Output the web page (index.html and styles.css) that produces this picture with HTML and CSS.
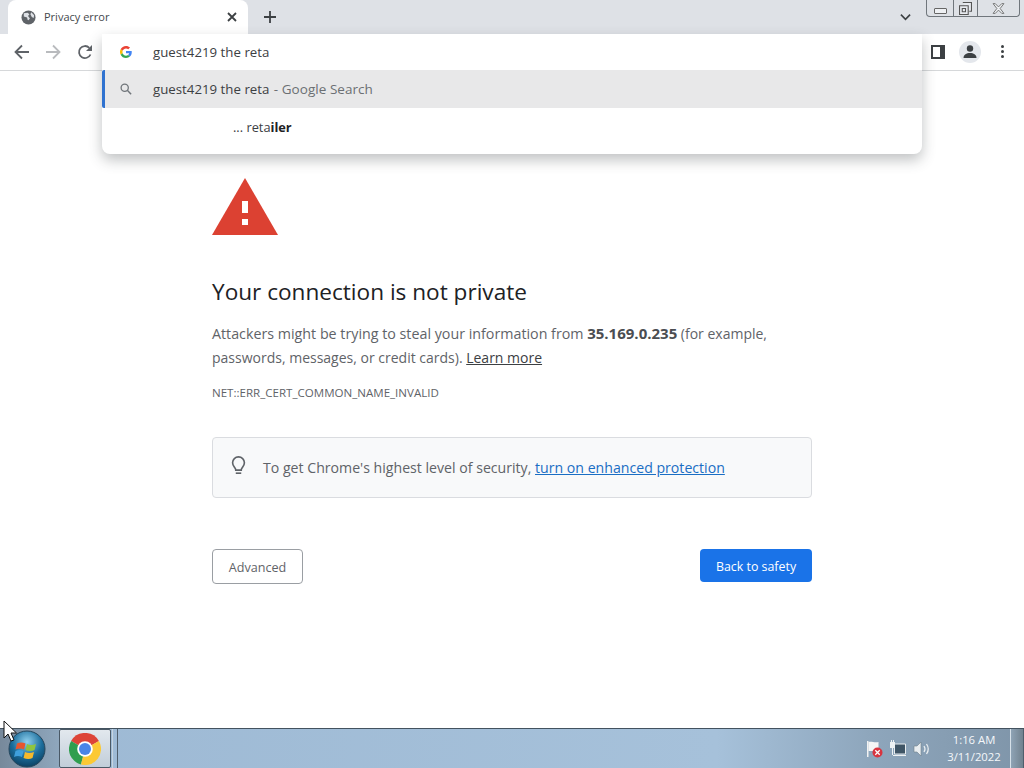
FILE: index.html
```html
<!DOCTYPE html>
<html lang="en">
<head>
<meta charset="utf-8">
<title>Privacy error</title>
<link rel="stylesheet" href="styles.css">
</head>
<body>
<div class="window">
  <header class="tabstrip">
    <div class="tab">
      <svg class="favicon" viewBox="0 0 16 16"><circle cx="8" cy="8" r="7.5" fill="#5f6368"/><path d="M3 3.500 7 3l2 1.500-1.500 2 2 2.500-1.500 2-1-.5-.5-2.500L3 7zM11 2.500l3 3-.5 3-2-1-1.500-3z" fill="#dee1e6"/></svg>
      <span class="tab-title">Privacy error</span>
      <svg class="tab-close" viewBox="0 0 10 10"><path d="M1 1l8 8M9 1l-8 8" stroke="#3c4043" stroke-width="1.800"/></svg>
    </div>
    <svg class="new-tab" viewBox="0 0 12 12"><path d="M6 0v12M0 6h12" stroke="#3c4043" stroke-width="1.800"/></svg>
    <div class="strip-spacer"></div>
    <svg class="tab-search" viewBox="0 0 12 8"><path d="M1 1.500l5 5 5-5" fill="none" stroke="#3c4043" stroke-width="1.800"/></svg>
    <div class="caption">
      <div class="cap cap-min"><span class="min-glyph"></span></div>
      <div class="cap cap-max"><svg viewBox="0 0 12 12" width="13" height="13"><path d="M3.500.5h8v8h-2M.5 3.500h8v8h-8zM3 6h3v3H3z" fill="#e8ebf0" stroke="#555"/></svg></div>
      <div class="cap cap-close"><svg viewBox="0 0 12 10" width="13" height="11"><path d="M1 .5h2L6 3.500 9 .5h2L7.500 5 11 9.500H9L6 6.500 3 9.500H1L4.500 5z" fill="#eef0f3" stroke="#666" stroke-width=".8"/></svg></div>
    </div>
  </header>

  <nav class="toolbar">
    <svg class="nav-icon nav-back" viewBox="0 0 16 16"><path d="M15 8H2M8 1.500 1.500 8 8 14.500" fill="none" stroke="#5f6368" stroke-width="1.800"/></svg>
    <svg class="nav-icon nav-forward" viewBox="0 0 16 16"><path d="M1 8h13M8 1.500 14.500 8 8 14.500" fill="none" stroke="#b9bbbe" stroke-width="1.800"/></svg>
    <svg class="nav-icon nav-reload" viewBox="0 0 16 16"><path d="M13.500 10.500A6 6 0 1 1 12.300 3.800" fill="none" stroke="#5f6368" stroke-width="1.800"/><path d="M15 1v6H9z" fill="#5f6368"/></svg>
    <div class="toolbar-spacer"></div>
    <svg class="tool-panel" viewBox="0 0 14 14"><path d="M0 0h14v14H0z" fill="#3c4043"/><path d="M2 2h7v10H2z" fill="#fff"/></svg>
    <div class="avatar"><svg viewBox="0 0 16 16" width="16" height="16"><circle cx="8" cy="4.500" r="3.200" fill="#3c4043"/><path d="M1.500 14c0-3.500 3-5 6.500-5s6.500 1.500 6.500 5z" fill="#3c4043"/></svg></div>
    <div class="kebab"><i></i><i></i><i></i></div>
  </nav>

  <main class="page">
    <div class="interstitial">
      <svg class="warn" viewBox="0 0 66 57"><path d="M33 0 66 57H0z" fill="#dc4132"/><path d="M30 23h6v12h-6zM30 41h6v6h-6z" fill="#fff"/></svg>
      <h1 class="heading">Your connection is not private</h1>
      <p class="lead"><span class="lead-wide">Attackers might be trying to steal your information from</span> <strong>35.169.0.235</strong> (for example, passwords, messages, or credit cards). <a class="learn">Learn more</a></p>
      <div class="errcode">NET::ERR_CERT_COMMON_NAME_INVALID</div>
      <div class="promo">
        <svg class="bulb" viewBox="0 0 16 22"><path d="M5 15.500C5 13 1.500 11.500 1.500 7.500a6.500 6.500 0 0 1 13 0c0 4-3.500 5.500-3.500 8z" fill="none" stroke="#5f6368" stroke-width="1.800"/><path d="M5 18h6v1.800H5z" fill="#5f6368"/></svg>
        <span>To get Chrome's highest level of security, <a class="promo-link">turn on enhanced protection</a></span>
      </div>
      <div class="actions">
        <button class="btn-advanced">Advanced</button>
        <button class="btn-safety">Back to safety</button>
      </div>
    </div>
  </main>

  <footer class="taskbar">
    <div class="start">
      <svg viewBox="0 0 38 38" width="38" height="38">
        <defs><radialGradient id="orb" cx=".5" cy=".3" r=".75"><stop offset="0" stop-color="#8fd0ee"/><stop offset=".55" stop-color="#1b6d9c"/><stop offset="1" stop-color="#0a3a59"/></radialGradient></defs>
        <circle cx="19" cy="19" r="18" fill="url(#orb)" stroke="#26465c"/>
        <path d="M9 13.500q4-2 8.500 0l-1.500 6q-4-2-8.500 0z" fill="#e8562e"/>
        <path d="M19 14q4 2 9 0l-1.500 6q-4 2-9 0z" fill="#8fc53e"/>
        <path d="M7.500 21q4-2 8 0l-1.500 6q-4-2-8 0z" fill="#3f9fdc"/>
        <path d="M17 22q4 2 9 0l-1.500 6q-4 2-9 0z" fill="#f6b92c"/>
      </svg>
    </div>
    <div class="task-chrome">
      <svg viewBox="0 0 32 32" width="32" height="32">
        <path d="M16 16 2.100 8A16 16 0 0 1 29.900 8z" fill="#dd4438"/>
        <path d="M16 16 2.100 8A16 16 0 0 0 12 31.500z" fill="#2f9e4f"/>
        <path d="M16 16 29.900 8A16 16 0 0 1 12 31.500z" fill="#fcc934"/>
        <circle cx="16" cy="16" r="7.800" fill="#fff"/>
        <circle cx="16" cy="16" r="6" fill="#4a85e8"/>
      </svg>
    </div>
    <div class="task-sliver"></div>
    <div class="task-spacer"></div>
    <div class="tray">
      <svg class="tray-icon" viewBox="0 0 18 18"><path d="M2 1h1.500v16H2z" fill="#f2f2f2"/><path d="M3.500 2c3-1 6 1 10 0v9h-10z" fill="#f6f6f6"/><circle cx="12.500" cy="12.500" r="5" fill="#d8343f"/><path d="M10.300 10.300l4.400 4.400M14.700 10.300l-4.400 4.400" stroke="#fff" stroke-width="1.300"/></svg>
      <svg class="tray-icon" viewBox="0 0 18 18"><path d="M5.500 4h11v10h-11z" fill="#3f5566" stroke="#e8edf0"/><path d="M1 2h5v6H1z" fill="#eef2f4"/><path d="M2 0h1v2H2zM4 0h1v2H4zM3 8h1v7H3zM4 15h13v1H4z" fill="#eef2f4"/></svg>
      <svg class="tray-icon" viewBox="0 0 18 18"><path d="M1 6h3l4-4v14l-4-4H1z" fill="#e8edf0" stroke="#6f7f8c" stroke-width=".6"/><path d="M11 6q2 3 0 6M13.500 4q3.500 5 0 10" fill="none" stroke="#e8edf0" stroke-width="1.300"/></svg>
    </div>
    <div class="clock"><span>1:16 AM</span><span>3/11/2022</span></div>
    <div class="show-desktop"></div>
  </footer>
</div>

<div class="omnibox">
  <div class="omni-input">
    <svg class="omni-g" viewBox="0 0 48 48"><path fill="#ea4335" d="M24 9.500c3.500 0 6.700 1.300 9.200 3.400l6.900-6.900C35.900 2.400 30.300 0 24 0 14.600 0 6.500 5.400 2.600 13.200l8 6.200C12.500 13.600 17.800 9.500 24 9.500z"/><path fill="#4285f4" d="M47 24.500c0-1.600-.2-3.100-.4-4.500H24v9h12.900c-.6 3-2.300 5.500-4.800 7.200l7.700 6C44.300 38 47 31.800 47 24.500z"/><path fill="#fbbc05" d="M10.600 28.600a14.500 14.500 0 0 1 0-9.200l-8-6.200a24 24 0 0 0 0 21.600z"/><path fill="#34a853" d="M24 48c6.500 0 11.900-2.100 15.800-5.800l-7.700-6c-2.100 1.400-4.900 2.300-8.100 2.300-6.200 0-11.500-4.100-13.400-9.900l-8 6.200C6.500 42.600 14.600 48 24 48z"/></svg>
    <span>guest4219 the reta</span>
  </div>
  <div class="omni-row selected">
    <svg class="omni-search" viewBox="0 0 14 14"><circle cx="5.500" cy="5.500" r="4.200" fill="none" stroke="#70757a" stroke-width="1.500"/><path d="M8.500 8.500l4.500 4.500" stroke="#70757a" stroke-width="1.700"/></svg>
    <span>guest4219 the reta <span class="omni-dim">- Google Search</span></span>
  </div>
  <div class="omni-row tail"><span>... reta<b>iler</b></span></div>
</div>

<svg class="cursor" viewBox="0 0 14 22"><path d="M1 1v17l4-4 3 7 3-1-3-7h5.500z" fill="#fff" stroke="#111" stroke-width="1"/></svg>
</body>
</html>
```
FILE: styles.css
```css
* { box-sizing: border-box; }
html, body { margin: 0; height: 100%; overflow: hidden; }
body { font-family: "Open Sans", "Noto Sans", "Liberation Sans", sans-serif; color: #3c4043; background: #fff; }
svg { display: block; flex: none; }

.window { display: flex; flex-direction: column; height: 768px; }

.tabstrip { height: 34px; flex: none; display: flex; align-items: flex-start; background: #dee1e6; padding-left: 8px; }
.tab { width: 240px; height: 34px; background: #fff; border-radius: 8px 8px 0 0; display: flex; align-items: center; padding: 0 11px 0 13px; }
.favicon { width: 15px; height: 15px; }
.tab-title { margin: 0 0 1px 8px; font-size: 11px; color: #45484c; flex: 1; }
.tab-close { width: 10px; height: 10px; }
.new-tab { width: 12px; height: 12px; margin: 11px 0 0 16px; }
.strip-spacer { flex: 1; }
.tab-search { width: 11px; height: 8px; margin: 13px 15px 0 0; }
.caption { display: flex; height: 17px; margin-right: 4px; border: 1px solid #70767c; border-top: 0; border-radius: 0 0 4px 4px; }
.cap { display: flex; align-items: center; justify-content: center; height: 16px; }
.cap-min { width: 26px; }
.min-glyph { width: 13px; height: 6px; margin-top: 5px; background: #eef0f3; border: 1px solid #666; border-radius: 1px; }
.cap-max { width: 25px; border-left: 1px solid #70767c; border-right: 1px solid #70767c; }
.cap-close { width: 41px; }

.toolbar { height: 37px; flex: none; display: flex; align-items: center; padding: 0 0 1px 14px; background: #fff; border-bottom: 1px solid #d6d8da; }
.nav-icon { width: 16px; height: 16px; }
.nav-forward { margin-left: 15px; }
.nav-reload { margin-left: 16px; }
.toolbar-spacer { flex: 1; }
.tool-panel { width: 14px; height: 14px; margin-right: 14px; }
.avatar { width: 22px; height: 22px; border-radius: 50%; background: #e4e7ec; display: flex; align-items: center; justify-content: center; margin-right: 20px; }
.kebab { width: 4px; display: flex; flex-direction: column; gap: 2px; margin-right: 19px; }
.kebab i { width: 3px; height: 3px; border-radius: 50%; background: #3c4043; }

.page { flex: 1; min-height: 0; background: #fff; }
.interstitial { width: 600px; margin: 0 auto; padding-top: 107px; }
.warn { width: 66px; height: 57px; }
.heading { margin: 39px 0 0; font-size: 22.600px; line-height: 36px; font-weight: 400; color: #202124; }
.lead { margin: 11px 0 0; font-size: 14px; line-height: 24px; color: #5f6368; }
.lead-wide { font-size: 14.270px; }
.lead strong { font-size: 15px; font-weight: 700; color: #4a4d51; }
.learn { color: #3c4043; text-decoration: underline; }
.errcode { margin-top: 15px; font-size: 11.550px; line-height: 16px; color: #5f6368; }
.promo { margin-top: 36px; height: 61px; display: flex; align-items: center; padding-left: 18px; gap: 17px; background: #f8f9fa; border: 1px solid #dadce0; border-radius: 4px; font-size: 14.130px; color: #5f6368; }
.bulb { width: 15px; height: 20px; margin-top: -3px; }
.promo-link { color: #1a6ec4; text-decoration: underline; }
.actions { margin-top: 51px; display: flex; justify-content: space-between; align-items: flex-start; }
.btn-advanced { width: 91px; height: 35px; background: #fff; border: 1px solid #9a9ea3; border-radius: 4px; font: 400 12.600px "Open Sans", "Noto Sans", sans-serif; color: #5f6368; padding: 2px 0 0; }
.btn-safety { width: 112px; height: 33px; background: #1a73e8; border: 0; border-radius: 4px; font: 400 12.400px "Open Sans", "Noto Sans", sans-serif; color: #fff; padding: 2px 0 0; }

.taskbar { height: 40px; flex: none; display: flex; align-items: stretch; background: linear-gradient(90deg, #9db9d4 0, #a6c1da 70%, #8ea6bc 85%, #7f95a9 100%); border-top: 1px solid #43525f; position: relative; }
.start { width: 59px; display: flex; align-items: center; justify-content: center; padding-right: 5px; background: linear-gradient(90deg, #77899b, #8fa7bd); }
.task-chrome { width: 52px; display: flex; align-items: center; justify-content: center; background: linear-gradient(#e2e8ee, #c2ced9); border: 1px solid #4a5966; border-radius: 2px; }
.task-sliver { width: 6px; border-right: 1px solid #4f5e6c; border-left: 1px solid #c6d4e0; margin-left: 1px; }
.task-spacer { flex: 1; }
.tray { display: flex; align-items: center; gap: 6px; margin-right: 14px; }
.tray-icon { width: 18px; height: 18px; }
.clock { width: 58px; margin-right: 7px; display: flex; flex-direction: column; align-items: center; justify-content: center; gap: 1px; font-size: 11.300px; line-height: 16px; color: #f4f7fa; }
.show-desktop { width: 14px; background: linear-gradient(90deg, #8ea3b5, #71828f); border-left: 1px solid #d5e0e8; border-right: 1px solid #4f5e6c; }

.omnibox { position: absolute; left: 102px; top: 34px; width: 820px; height: 120px; background: #fff; border-radius: 0 0 8px 8px; box-shadow: 0 6px 14px rgba(60, 64, 67, .32); font-size: 13.270px; color: #3c4043; }
.omni-input { height: 36px; display: flex; align-items: center; padding-left: 18px; gap: 21px; }
.omni-g { width: 12px; height: 12px; }
.omni-row { height: 38px; display: flex; align-items: center; }
.omni-row.selected { gap: 21px; background: #e8e8e9; border-left: 3px solid #2f72d0; padding-left: 15px; border-radius: 2px 0 0 2px; }
.omni-search { width: 12px; height: 12px; }
.omni-dim { font-size: 13.500px; letter-spacing: .04px; color: #6b6f73; margin-left: 1px; }
.omni-row.tail { padding-left: 131px; font-size: 12.800px; }
.omni-row.tail b { color: #202124; }

.cursor { position: absolute; left: 3px; top: 720px; width: 14px; height: 22px; }
```
